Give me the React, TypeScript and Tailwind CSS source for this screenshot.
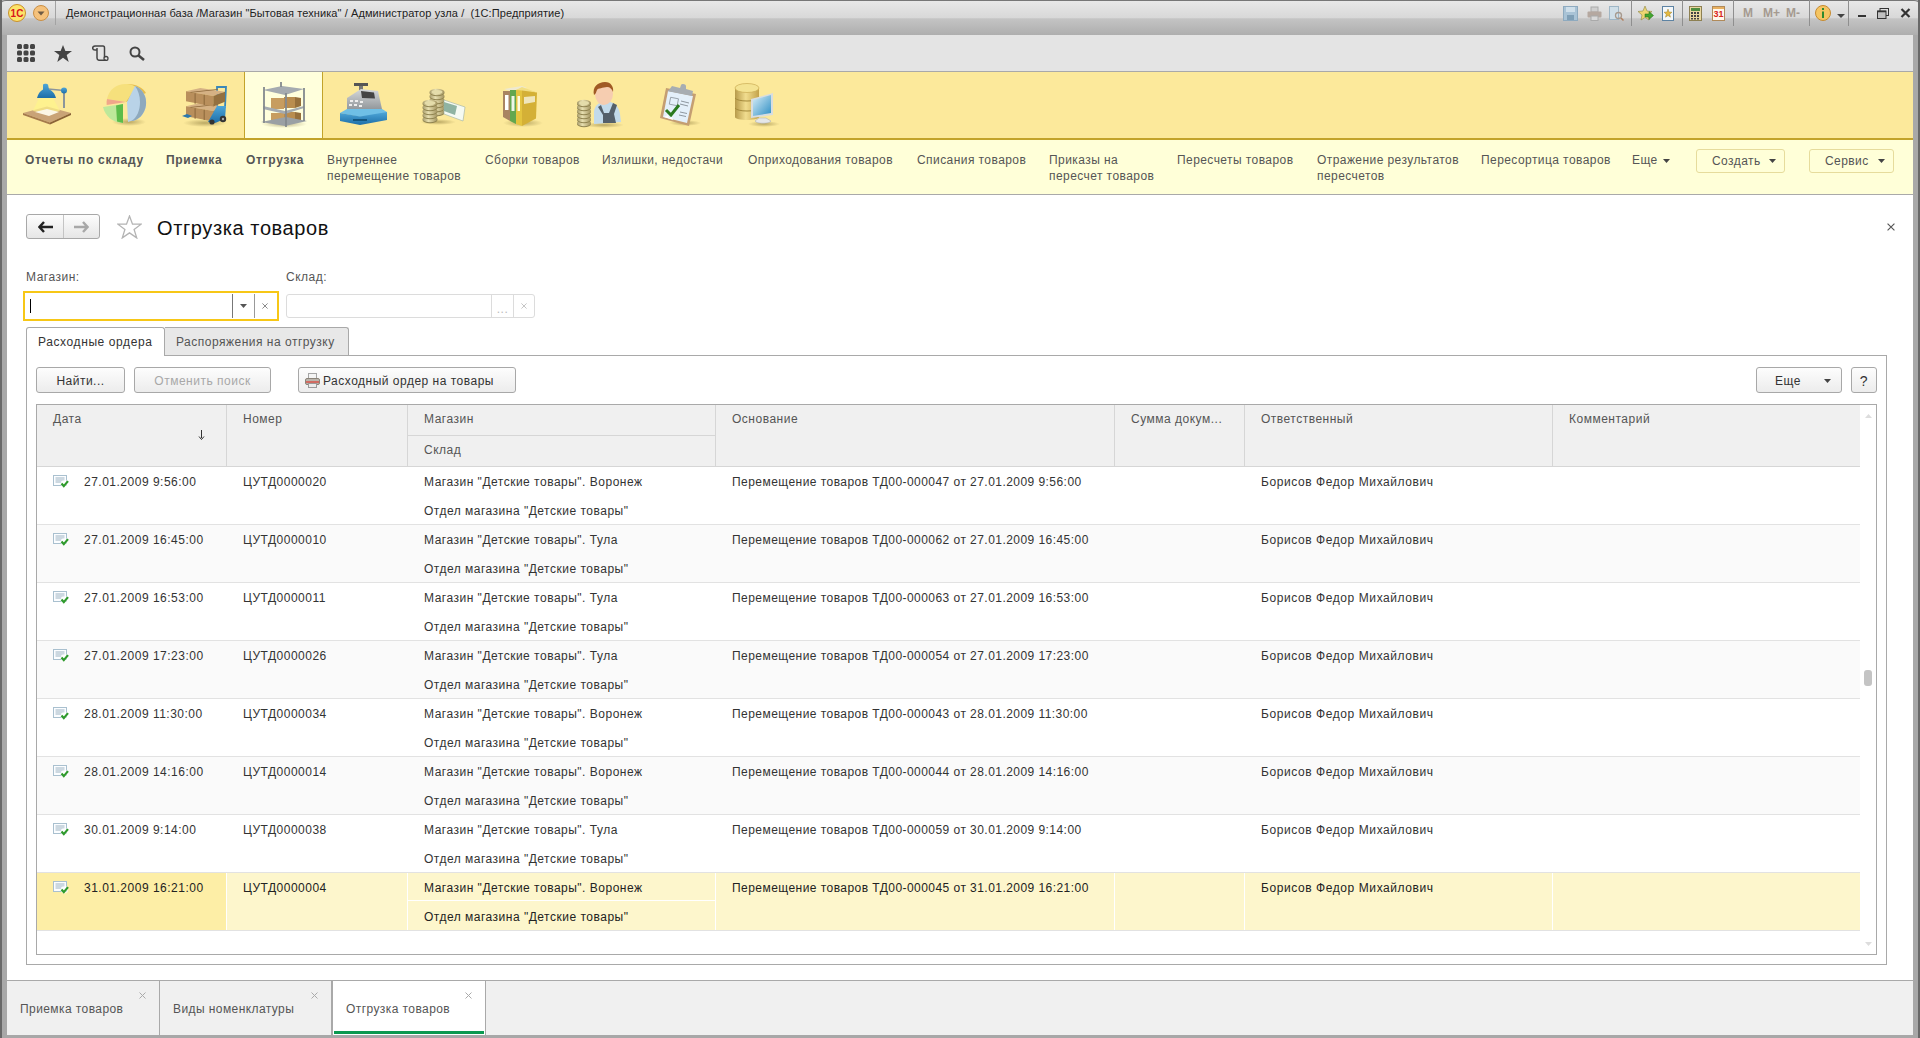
import React from "react";

const rows = [
  ["27.01.2009 9:56:00", "ЦУТД0000020", "Воронеж", "000047"],
  ["27.01.2009 16:45:00", "ЦУТД0000010", "Тула", "000062"],
  ["27.01.2009 16:53:00", "ЦУТД0000011", "Тула", "000063"],
  ["27.01.2009 17:23:00", "ЦУТД0000026", "Тула", "000054"],
  ["28.01.2009 11:30:00", "ЦУТД0000034", "Воронеж", "000043"],
  ["28.01.2009 14:16:00", "ЦУТД0000014", "Воронеж", "000044"],
  ["30.01.2009 9:14:00", "ЦУТД0000038", "Тула", "000059"],
  ["31.01.2009 16:21:00", "ЦУТД0000004", "Воронеж", "000045"],
];

const gridCols = "grid grid-cols-[190px_181px_308px_399px_130px_308px_307px]";

function Caret({ color = "#444" }: { color?: string }) {
  return (
    <svg width="7" height="4" viewBox="0 0 7 4" className="shrink-0">
      <path d="M0 0h7L3.5 4z" fill={color} />
    </svg>
  );
}

function Cross({ color = "#888", size = 7 }: { color?: string; size?: number }) {
  return (
    <svg width={size} height={size} viewBox="0 0 7 7" className="shrink-0">
      <path d="M.5.5l6 6M6.5.5l-6 6" stroke={color} strokeWidth="1" fill="none" />
    </svg>
  );
}

function DocCheck() {
  return (
    <svg width="16" height="13" viewBox="0 0 16 13" className="shrink-0">
      <rect x="0.5" y="0.5" width="13" height="10" fill="#fbfdff" stroke="#a9c0cf" />
      <path d="M2.5 3h9M2.5 5h9M2.5 7h6" stroke="#9db3c2" strokeWidth="1" />
      <circle cx="11.5" cy="8.8" r="3.8" fill="#fff" opacity="0.6" />
      <path d="M8.5 8.5l2.3 2.6 4.2-5" stroke="#2f9a2c" strokeWidth="2.2" fill="none" />
    </svg>
  );
}

function PrinterIcon() {
  return (
    <svg width="15" height="15" viewBox="0 0 15 15" className="shrink-0">
      <rect x="3.5" y="0.5" width="8" height="6" fill="#f4f4f4" stroke="#a5a5a5" />
      <rect x="0.5" y="5.5" width="14" height="6" rx="1.5" fill="#b9b4ac" stroke="#8b8378" />
      <rect x="1" y="8" width="13" height="2" fill="#d9534a" opacity="0.75" />
      <rect x="3.5" y="10.5" width="8" height="4" fill="#ececec" stroke="#9a9a9a" />
    </svg>
  );
}

function BigDefs() {
  return (
    <svg width="0" height="0" className="absolute">
      <defs>
        <linearGradient id="gBlue" x1="0" y1="0" x2="0" y2="1">
          <stop offset="0" stopColor="#4ea6d8" />
          <stop offset="1" stopColor="#1d6ea8" />
        </linearGradient>
        <linearGradient id="gGold" x1="0" y1="0" x2="1" y2="0">
          <stop offset="0" stopColor="#b79a4a" />
          <stop offset="0.45" stopColor="#f1dd8f" />
          <stop offset="1" stopColor="#c3a24a" />
        </linearGradient>
        <linearGradient id="gCoin" x1="0" y1="0" x2="1" y2="0">
          <stop offset="0" stopColor="#a69a6a" />
          <stop offset="0.4" stopColor="#e7dfb0" />
          <stop offset="1" stopColor="#a1925e" />
        </linearGradient>
        <linearGradient id="gGray" x1="0" y1="0" x2="0" y2="1">
          <stop offset="0" stopColor="#d5d8da" />
          <stop offset="1" stopColor="#8d9296" />
        </linearGradient>
        <linearGradient id="gScreen" x1="0" y1="0" x2="1" y2="1">
          <stop offset="0" stopColor="#d8eef8" />
          <stop offset="1" stopColor="#2f8fc4" />
        </linearGradient>
        <radialGradient id="gShadow">
          <stop offset="0" stopColor="#6b5a20" stopOpacity="0.45" />
          <stop offset="1" stopColor="#6b5a20" stopOpacity="0" />
        </radialGradient>
      </defs>
    </svg>
  );
}

const Big = ({ children }: { children: React.ReactNode }) => (
  <svg width="48" height="48" viewBox="0 0 48 48">
    {children}
  </svg>
);

function Lamp() {
  return (
    <Big>
      <path d="M0 32L24 25.5 48 32 27 41.5z" fill="#c9a377" />
      <path d="M0 32L27 41.5V43.5L0 34z" fill="#a57a4d" />
      <path d="M27 41.5L48 32v2L27 43.5z" fill="#8a6238" />
      <path d="M16 17h14l7 13-13 3-14-3z" fill="#fff58a" opacity="0.7" />
      <path d="M12 31L24 28l12 3-10 4z" fill="#fbf6e6" />
      <path d="M41 10v17" stroke="#8c959b" strokeWidth="2" />
      <path d="M25 8L41 9.5" stroke="#8c959b" strokeWidth="1.6" />
      <circle cx="41" cy="9.5" r="3" fill="url(#gBlue)" />
      <path d="M20 3.500c1-1 4-1 5 0l1 5c3 1 6 4 7 8.500H14c1-4 3-7 6-8.500z" fill="url(#gBlue)" />
    </Big>
  );
}

function Pie() {
  return (
    <Big>
      <ellipse cx="27" cy="41" rx="17" ry="4" fill="url(#gShadow)" />
      <path d="M24 21L25 3c9-.3 16 4 19 9z" fill="#e5bd4d" />
      <path d="M24 21L5 18C7 8 15 2.5 25 3c3 .2 6 1 9 3z" fill="#f6e07c" />
      <path d="M24 21L5 18c-.5 2-.6 4-.3 6z" fill="#f0a68a" />
      <path d="M25 21l8-16c8 3 12 11 11 19-1 9-8 16-15 16l-3 1z" fill="#b9d3e8" />
      <path d="M33 5c8 3 12 11 11 19-1 9-8 16-15 16 6-3 9-11 9-19 0-6-2-12-5-16z" fill="#8ea9bd" />
      <path d="M1 26l20-3v19C11 42 3 35 1 26z" fill="#bde89a" />
      <path d="M14 24.500L21 23v19l-6 -1.500z" fill="#5cbc4a" />
    </Big>
  );
}

function Box({ x, y }: { x: number; y: number }) {
  return (
    <g transform={`translate(${x} ${y}) scale(1.3 0.95)`}>
      <path d="M0 3.500L11 0l19 4-9 4.500z" fill="#d5b184" />
      <path d="M0 3.500L21 8.500V19.500L0 14z" fill="#b98f5c" />
      <path d="M21 8.500l9-4.500v10.500l-9 5z" fill="#94703f" />
      <path d="M7 5.500v11M14 7v11M3.500 4.500l21-3" stroke="#8d693c" strokeWidth="0.8" fill="none" />
    </g>
  );
}

function Pallet() {
  return (
    <Big>
      <ellipse cx="24" cy="42" rx="22" ry="4" fill="url(#gShadow)" />
      <path d="M36 6h9l-1 20h-8z" fill="none" stroke="#3a87b8" strokeWidth="1.800" />
      <path d="M36 13h8" stroke="#3a87b8" strokeWidth="1.500" />
      <Box x={5} y={22} />
      <Box x={5} y={7} />
      <path d="M1 35l5-2 5 2-4 2z" fill="#2b78ad" />
      <path d="M36 25h9l-1 13-10 4-7-1z" fill="url(#gBlue)" />
      <circle cx="31" cy="41" r="2.600" fill="#333" />
      <circle cx="42" cy="38" r="3.200" fill="#333" />
      <circle cx="42" cy="38" r="1.200" fill="#aaa" />
    </Big>
  );
}

function Shelf() {
  return (
    <Big>
      <ellipse cx="24" cy="43" rx="23" ry="4" fill="url(#gShadow)" />
      <rect x="11" y="17" width="13" height="11" fill="#c79d5f" />
      <rect x="24" y="16" width="11" height="11" fill="#b98d4f" />
      <path d="M35 16l6 1v8l-6 2z" fill="#96703c" />
      <rect x="11" y="32" width="13" height="10" fill="#c79d5f" />
      <rect x="24" y="31" width="11" height="10" fill="#b98d4f" />
      <path d="M35 31l6 1v8l-6 2z" fill="#96703c" />
      <path d="M3 9l19-4 22 3-19 6z" fill="#a5abb0" />
      <path d="M3 25l22 5 19-5v2l-19 6-22-5z" fill="#a5abb0" />
      <path d="M1 41l24 4 22-5-21-4z" fill="#9aa0a4" />
      <path d="M4 6v36M26 12v34M44 7v33M21 1v5" stroke="#848a8e" strokeWidth="1.800" />
    </Big>
  );
}

function Register() {
  return (
    <Big>
      <path d="M15 2h14v3H15z" fill="#555" />
      <path d="M20 5h4v6h-4z" fill="#777" />
      <path d="M8 17L22 8l17 2 4 18-35 2z" fill="url(#gGray)" />
      <path d="M22 10l13 1.500 1 6-13-.5z" fill="#444" />
      <g fill="#eee">
        <rect x="11" y="19" width="3" height="2" />
        <rect x="16" y="19" width="3" height="2" />
        <rect x="21" y="20" width="3" height="2" />
        <rect x="10" y="23" width="3" height="2" />
        <rect x="15" y="23" width="3" height="2" />
        <rect x="20" y="24" width="3" height="2" />
      </g>
      <path d="M1 32l7-4 35 0 5 3-1 2-26 3z" fill="#6fbfe6" />
      <path d="M1 32l20 3.500 27-4.500v8L21 44 1 40z" fill="url(#gBlue)" />
      <rect x="14" y="38" width="14" height="2" fill="#13557f" />
    </Big>
  );
}

function CoinStack({ x, bottom, n, w = 13 }: { x: number; bottom: number; n: number; w?: number }) {
  const els = [];
  for (let i = 0; i < n; i++) {
    const y = bottom - i * 4;
    els.push(
      <g key={i}>
        <ellipse cx={x} cy={y} rx={w / 2 + 1} ry="3.200" fill="#8f834f" />
        <ellipse cx={x} cy={y - 1} rx={w / 2 + 1} ry="3.200" fill="url(#gCoin)" />
      </g>,
    );
  }
  return <g>{els}<ellipse cx={x} cy={bottom - (n - 1) * 4 - 1} rx={w / 2 - 1} ry="2" fill="#e4dcaa" /></g>;
}

function Coins() {
  return (
    <Big>
      <ellipse cx="20" cy="41" rx="18" ry="3" fill="url(#gShadow)" />
      <CoinStack x={19} bottom={32} n={6} />
      <path d="M26 19l21 7-2 14-19-7z" fill="#f5faf2" stroke="#9cb0a2" strokeWidth="0.6" />
      <path d="M26 21l13 4-2 9-11-4z" fill="#8fb3a2" />
      <CoinStack x={12} bottom={39} n={5} />
    </Big>
  );
}

function Binders() {
  return (
    <Big>
      <ellipse cx="26" cy="42" rx="20" ry="4" fill="url(#gShadow)" />
      <path d="M7 8l18-3 5 2-17 3z" fill="#eee9d0" />
      <path d="M6 10h7v30l-7-4z" fill="#a98462" />
      <rect x="8" y="14" width="3.500" height="15" fill="#fff" />
      <path d="M13 9h6v34l-6-3z" fill="#63a74f" />
      <rect x="14.500" y="15" width="3" height="15" fill="#eef6e8" />
      <path d="M19 9l6-1v37l-6-2z" fill="#e4c43f" />
      <path d="M25 8l15 3.500-1 26L25 45z" fill="#d4b036" />
      <path d="M19 9l6-3 15 5.500-15 -2z" fill="#f2de82" />
      <path d="M27 16l11-1v6l-11 2z" fill="#f0e6bb" />
      <rect x="20.500" y="15" width="2.500" height="15" fill="#fffbe0" />
    </Big>
  );
}

function Person() {
  return (
    <Big>
      <ellipse cx="28" cy="44" rx="20" ry="3" fill="url(#gShadow)" />
      <path d="M18 30c1-6 6-9 9-9h7c5 1 9 5 10 12l1 8-27 2z" fill="#c2daea" />
      <path d="M22 26l5 8v8h13l-2-9 3-9-4-2-4 10h-5l-3-8z" fill="#54606a" />
      <ellipse cx="28" cy="13" rx="9" ry="11" fill="#f6cdb0" />
      <path d="M18 14c-2-8 4-13 11-13 6 0 9 5 8 10-1-3-3-5-6-5-4 1-9 1-10 3-1 2-1 4-3 5z" fill="#a05a24" />
      <CoinStack x={8} bottom={43} n={6} w={12} />
    </Big>
  );
}

function Clipboard() {
  return (
    <Big>
      <ellipse cx="30" cy="42" rx="16" ry="3" fill="url(#gShadow)" />
      <path d="M11 7l30 6-7 32L5 37z" fill="#c49e72" />
      <path d="M13 10l25 5-6 27-24-6z" fill="#e4f0fa" />
      <path d="M14 9l3-4 8 2 1-3c1-2 5-1 5 1v3l7 2-1 5-25-5z" fill="#a7adb2" />
      <rect x="15" y="17" width="8" height="7" fill="none" stroke="#8e979f" strokeWidth="0.8" transform="rotate(11 19 20)" />
      <path d="M26 20l8 2M25 23l8 2M25 31l7 1.500M24 34l7 1.500" stroke="#8e979f" strokeWidth="1" />
      <path d="M11 29l5 5 8-10" stroke="#2a7a1f" strokeWidth="3" fill="none" />
      <path d="M9 36l4-2 1 3 3-1 1 3z" fill="#fff" />
    </Big>
  );
}

function Database() {
  return (
    <Big>
      <ellipse cx="30" cy="43" rx="16" ry="3" fill="url(#gShadow)" />
      <path d="M1 7v29c0 4 24 4 24 0V7z" fill="url(#gGold)" />
      <ellipse cx="13" cy="7" rx="12" ry="4.500" fill="#f4e392" stroke="#c3a24a" strokeWidth="0.6" />
      <path d="M1 17c2 4 22 4 24 0M1 27c2 4 22 4 24 0" stroke="#a48a3c" strokeWidth="1" fill="none" />
      <path d="M17 18l22-6 0 22-22 3z" fill="#d8dde0" />
      <path d="M19 19l18-5 0 18-18 3z" fill="url(#gScreen)" />
      <path d="M25 37h7l5 3c-1 3-15 3-16 0z" fill="#e5e7e8" stroke="#a5a9ac" strokeWidth="0.5" />
    </Big>
  );
}

const sections = [Lamp, Pie, Pallet, Shelf, Register, Coins, Binders, Person, Clipboard, Database];

const menu: [number, string[], boolean][] = [
  [141, ["Отчеты по складу"], true],
  [80, ["Приемка"], true],
  [81, ["Отгрузка"], true],
  [158, ["Внутреннее", "перемещение товаров"], false],
  [117, ["Сборки товаров"], false],
  [146, ["Излишки, недостачи"], false],
  [169, ["Оприходования товаров"], false],
  [132, ["Списания товаров"], false],
  [128, ["Приказы на", "пересчет товаров"], false],
  [140, ["Пересчеты товаров"], false],
  [164, ["Отражение результатов", "пересчетов"], false],
  [151, ["Пересортица товаров"], false],
];

function Btn({
  w,
  children,
  disabled,
  className = "",
}: {
  w: string;
  children: React.ReactNode;
  disabled?: boolean;
  className?: string;
}) {
  return (
    <div
      className={`${w} ${className} h-[26px] pt-px flex items-center justify-center rounded-[3px] border border-[#a8a8a8] bg-[linear-gradient(180deg,#fdfdfd,#ececec)] ${
        disabled ? "text-[#a8a8a8]" : "text-[#333]"
      }`}
    >
      {children}
    </div>
  );
}

function Sep() {
  return <div className="w-px h-[26px] bg-[#8f8f8f] shrink-0" />;
}

function TitleBar() {
  return (
    <div className="h-[35px] shrink-0 flex items-center pb-[10px] rounded-t-[6px] border-t border-[#777] tracking-normal bg-[linear-gradient(180deg,#e8e8e8_0%,#d8d8d8_50%,#c4c4c4_52%,#aeaeae_100%)] -ml-[2px] -mr-[2px]">
      <div className="w-[8px] shrink-0" />
      <svg width="18" height="18" viewBox="0 0 18 18" className="shrink-0">
        <circle cx="9" cy="9" r="8.500" fill="#fde46a" stroke="#c9902a" />
        <text x="9" y="12.500" textAnchor="middle" fontSize="10" fontWeight="700" fontFamily="Liberation Sans" fill="#d9161c">1С</text>
      </svg>
      <div className="w-[7px] shrink-0" />
      <svg width="16" height="16" viewBox="0 0 16 16" className="shrink-0">
        <circle cx="8" cy="8" r="7.500" fill="#f5c27c" stroke="#c98f45" />
        <path d="M4.500 6.500h7L8 10.500z" fill="#6d5a44" />
      </svg>
      <div className="ml-[6px] w-px h-[24px] bg-[#a3a3a3]" />
      <div className="ml-[10px] text-[#222] text-[11px] tracking-[0.09px] whitespace-nowrap">Демонстрационная база /Магазин "Бытовая техника" / Администратор узла /&nbsp; (1С:Предприятие)</div>
      <div className="flex-1" />
      <div className="flex items-center shrink-0">
        <svg width="15" height="15" viewBox="0 0 15 15"><rect x="0.5" y="0.5" width="14" height="14" fill="#a9c3d6" stroke="#8eaabf" /><rect x="3" y="1" width="9" height="5" fill="#cfdfea" /><rect x="4" y="9" width="7" height="5" fill="#7f9fb6" /></svg>
        <div className="w-[9px]" />
        <svg width="15" height="15" viewBox="0 0 15 15"><rect x="4" y="1" width="7" height="5" fill="#cfcfcf" stroke="#aaa" /><rect x="0.5" y="5.500" width="14" height="6" rx="1" fill="#b5a8a0" /><rect x="4" y="10" width="7" height="4.500" fill="#d9d9d9" stroke="#aaa" /></svg>
        <div className="w-[7px]" />
        <svg width="15" height="15" viewBox="0 0 15 15"><rect x="0.5" y="0.5" width="9" height="13" fill="#d0dfe8" stroke="#9eb6c6" /><circle cx="9.500" cy="9.500" r="3" fill="none" stroke="#a79a8e" strokeWidth="1.300" /><path d="M12 12l2.500 2.500" stroke="#b08060" strokeWidth="1.500" /></svg>
        <div className="w-[7px]" />
        <Sep />
        <div className="w-[6px]" />
        <svg width="16" height="15" viewBox="0 0 16 15"><path d="M7 0l2 5 5 .5-4 3.500 1 5-4-2.500-4 2.500 1-5L0 5.500 5 5z" fill="#ecd572" stroke="#8f8645" strokeWidth="0.6" /><path d="M7 8h4V5.500L15.500 9.500 11 13.500V11H7z" fill="#43a52f" stroke="#236b18" strokeWidth="0.5" /></svg>
        <div className="w-[8px]" />
        <svg width="12" height="15" viewBox="0 0 12 15"><rect x="0.5" y="0.5" width="11" height="14" fill="#f3f7fa" stroke="#5d83a3" /><path d="M6 3l1 3 3 .2-2.300 2 .8 3L6 9.500 3.500 11.200l.8-3-2.300-2L5 6z" fill="#e5b93f" stroke="#8f7420" strokeWidth="0.4" /></svg>
        <div className="w-[8px]" />
        <Sep />
        <div className="w-[6px]" />
        <svg width="13" height="15" viewBox="0 0 13 15"><rect x="0.5" y="0.5" width="12" height="14" fill="#e8d7a0" stroke="#8d8052" /><rect x="2" y="2" width="9" height="3" fill="#4f8d3f" /><g fill="#444"><rect x="2" y="6" width="2" height="2" /><rect x="5" y="6" width="2" height="2" /><rect x="8" y="6" width="2" height="2" /><rect x="2" y="9" width="2" height="2" /><rect x="5" y="9" width="2" height="2" /><rect x="8" y="9" width="2" height="2" /><rect x="2" y="12" width="2" height="1.500" /><rect x="5" y="12" width="2" height="1.500" /><rect x="8" y="12" width="2" height="1.500" /></g></svg>
        <div className="w-[10px]" />
        <div className="w-[13px] h-[15px] border border-[#b08a5a] bg-[#fff8ec] flex flex-col">
          <div className="h-[3px] bg-[#e8b060]" />
          <div className="flex-1 text-[9px] leading-[11px] font-bold text-[#d8261c] text-center">31</div>
        </div>
        <div className="w-[8px]" />
        <Sep />
        <div className="w-[9px]" />
        <div className="flex items-center font-bold text-[#a59a90] text-[12px]">
          <span className="w-[20px]">M</span>
          <span className="w-[23px]">M+</span>
          <span className="w-[23px]">M-</span>
        </div>
        <Sep />
        <div className="w-[5px]" />
        <svg width="16" height="16" viewBox="0 0 16 16"><circle cx="8" cy="8" r="7.500" fill="#f5c562" stroke="#c58a30" /><rect x="7" y="3" width="2" height="2" fill="#2f8a2f" /><rect x="7" y="6.500" width="2" height="6.500" fill="#2f8a2f" /></svg>
        <div className="w-[6px]" />
        <div className="mt-[6px]"><svg width="8" height="4" viewBox="0 0 8 4" className="shrink-0"><path d="M0 0h8L4 4z" fill="#444" /></svg></div>
        <div className="w-[3px]" />
        <Sep />
        <div className="w-[9px]" />
        <div className="w-[8px] h-[2px] bg-[#333] mt-[5px]" />
        <div className="w-[11px]" />
        <svg width="12" height="11" viewBox="0 0 12 11"><rect x="3" y="0.500" width="8.500" height="7" fill="none" stroke="#333" /><rect x="0.500" y="3" width="8.500" height="7.500" fill="#c0c0c0" stroke="#333" /><path d="M0.500 3.500h8.500" stroke="#333" strokeWidth="1.500" /></svg>
        <div className="w-[11px]" />
        <svg width="11" height="10" viewBox="0 0 11 10"><path d="M1.500 1l8 8M9.500 1l-8 8" stroke="#333" strokeWidth="2.200" /></svg>
        <div className="w-[9px]" />
      </div>
    </div>
  );
}

function Toolbar() {
  return (
    <div className="h-[37px] shrink-0 flex items-center bg-[#e4e4e4] border-b border-[#a9a9a9] pl-[10px]">
      <svg width="18" height="18" viewBox="0 0 18 18" className="shrink-0">
        <g fill="#444">
          {[0, 1, 2].flatMap((r) =>
            [0, 1, 2].map((c) => <rect key={`${r}${c}`} x={c * 6.500} y={r * 6.500} width="5" height="5" rx="1.500" />),
          )}
        </g>
      </svg>
      <svg width="18" height="17" viewBox="0 0 18 17" className="ml-[19px] shrink-0">
        <path d="M9 0l2.400 6H18l-5.300 4 2 7L9 12.800 3.300 17l2-7L0 6h6.600z" fill="#444" />
      </svg>
      <svg width="17" height="16" viewBox="0 0 17 16" className="ml-[20px] shrink-0">
        <path d="M3 1h8c1 0 1.500 .8 1.500 2v9.500M3 1C1.500 1 .7 2 .7 3s.8 2 2.300 2h2M5 3v10c0 1.500 1 2.300 2.500 2.300H14" fill="none" stroke="#444" strokeWidth="1.500" />
        <circle cx="14" cy="13.500" r="2" fill="none" stroke="#444" strokeWidth="1.300" />
      </svg>
      <svg width="16" height="15" viewBox="0 0 16 15" className="ml-[20px] shrink-0">
        <circle cx="6" cy="6" r="4.500" fill="none" stroke="#444" strokeWidth="2" />
        <path d="M9.500 9.500L15 14" stroke="#444" strokeWidth="2.600" />
      </svg>
    </div>
  );
}

function SectionPanel() {
  return (
    <div className="h-[68px] shrink-0 flex bg-[#fce99b] border-b-2 border-[#c2a32a]">
      {sections.map((S, i) => (
        <div
          key={i}
          className={`w-[79px] flex items-center justify-center ${
            i === 3 ? "bg-[#ffffdc] border-x border-[#c2a32a]" : ""
          }`}
        >
          <S />
        </div>
      ))}
    </div>
  );
}

function FuncPanel() {
  return (
    <div className="h-[55px] shrink-0 flex bg-[#ffffd8] border-b border-[#a9a9a9] pl-[18px] text-[#555] tracking-[0.43px]">
      {menu.map(([w, lines, bold], i) => (
        <div
          key={i}
          style={{ width: w }}
          className={`shrink-0 pt-[12px] leading-[16px] whitespace-nowrap ${bold ? "font-bold tracking-[0.7px]" : ""}`}
        >
          {lines.map((l) => (
            <div key={l}>{l}</div>
          ))}
        </div>
      ))}
      <div className="w-[64px] shrink-0 pt-[12px] leading-[16px] flex items-start gap-[5px]">
        <span>Еще</span>
        <span className="mt-[7px]"><Caret /></span>
      </div>
      <div className="w-[89px] h-[24px] mt-[9px] pb-px rounded-[3px] border border-[#e6dc9c] flex items-center pl-[15px] shrink-0">
        <span className="w-[57px]">Создать</span>
        <Caret />
      </div>
      <div className="w-[85px] h-[24px] mt-[9px] pb-px ml-[24px] rounded-[3px] border border-[#e6dc9c] flex items-center pl-[15px] shrink-0">
        <span className="w-[53px]">Сервис</span>
        <Caret />
      </div>
    </div>
  );
}

function Row({ r, i }: { r: string[]; i: number }) {
  const sel = i === 7;
  const alt = i % 2 === 1 && !sel;
  const line = sel ? "border-r border-[#fff]" : "";
  const bg = sel ? "bg-[#fdf6cc]" : alt ? "bg-[#fafafa]" : "bg-white";
  return (
    <div className={`${gridCols} h-[58px] border-b border-[#e2e2e2] ${bg} ${sel ? "text-[#222]" : "text-[#333]"}`}>
      <div className={`pl-4 pt-[8px] flex items-start ${line} ${sel ? "bg-[#fdeea6]" : ""}`}>
        <DocCheck />
        <span className="ml-[15px] leading-[14px] whitespace-nowrap">{r[0]}</span>
      </div>
      <div className={`pl-4 pt-[7px] leading-[16px] ${line}`}>{r[1]}</div>
      <div className={`flex flex-col ${line}`}>
        <div className={`h-[28px] pl-4 pt-[7px] leading-[16px] whitespace-nowrap ${sel ? "border-b border-[#fff]" : ""}`}>
          Магазин "Детские товары". {r[2]}
        </div>
        <div className="h-[29px] pl-4 pt-[8px] leading-[16px] whitespace-nowrap">Отдел магазина "Детские товары"</div>
      </div>
      <div className={`pl-4 pt-[7px] leading-[16px] whitespace-nowrap tracking-[0.45px] ${line}`}>
        Перемещение товаров ТД00-{r[3]} от {r[0]}
      </div>
      <div className={line} />
      <div className={`pl-4 pt-[7px] leading-[16px] whitespace-nowrap tracking-[0.58px] ${line}`}>Борисов Федор Михайлович</div>
      <div />
    </div>
  );
}

function Table() {
  const hc = "pl-4 pt-[6px] leading-[16px] border-r border-[#d6d6d6] text-[#555] whitespace-nowrap";
  return (
    <div className="flex-1 flex border border-[#a9a9a9] bg-white min-h-0">
      <div className="w-[1823px] shrink-0 flex flex-col">
        <div className={`${gridCols} h-[62px] bg-[#f0f0f0] border-b border-[#d6d6d6] shrink-0`}>
          <div className={`${hc} flex flex-col`}>
            <span>Дата</span>
            <svg width="7" height="10" viewBox="0 0 7 10" className="ml-[145px] mt-[3px]">
              <path d="M3.500 0v8M1 6.500L3.500 9.500 6 6.500" stroke="#333" fill="none" />
            </svg>
          </div>
          <div className={hc}>Номер</div>
          <div className="flex flex-col border-r border-[#d6d6d6] text-[#555]">
            <div className="h-[31px] pl-4 pt-[6px] leading-[16px] border-b border-[#d6d6d6]">Магазин</div>
            <div className="pl-4 pt-[6px] leading-[16px]">Склад</div>
          </div>
          <div className={hc}>Основание</div>
          <div className={hc}>Сумма докум...</div>
          <div className={hc}>Ответственный</div>
          <div className="pl-4 pt-[6px] leading-[16px] text-[#555]">Комментарий</div>
        </div>
        {rows.map((r, i) => (
          <Row key={i} r={r} i={i} />
        ))}
      </div>
      <div className="flex-1 flex flex-col items-center pt-[9px] pb-[8px]">
        <svg width="7" height="4" viewBox="0 0 7 4" className="shrink-0"><path d="M0 4h7L3.500 0z" fill="#ddd" /></svg>
        <div className="w-[8px] h-[16px] mt-[252px] rounded-[3px] bg-[#c4c4c4] shrink-0" />
        <div className="flex-1" />
        <svg width="7" height="4" viewBox="0 0 7 4" className="shrink-0"><path d="M0 0h7L3.500 4z" fill="#ddd" /></svg>
      </div>
    </div>
  );
}

function Content() {
  return (
    <div className="flex-1 min-h-0 flex flex-col bg-white">
      <div className="h-[25px] mt-[19px] flex items-center pl-[19px] pr-[18px] shrink-0">
        <div className="w-[74px] h-[25px] flex rounded-[3px] border border-[#a8a8a8] bg-[linear-gradient(180deg,#fdfdfd,#e6e6e6)]">
          <div className="w-[37px] flex items-center justify-center border-r border-[#c4c4c4]">
            <svg width="15" height="12" viewBox="0 0 15 12"><path d="M6 1L1.500 6 6 11M2 6h13" fill="none" stroke="#222" strokeWidth="2.400" /></svg>
          </div>
          <div className="flex-1 flex items-center justify-center">
            <svg width="15" height="12" viewBox="0 0 15 12"><path d="M9 1l4.500 5L9 11M0 6h13" fill="none" stroke="#a8a8a8" strokeWidth="2.400" /></svg>
          </div>
        </div>
        <svg width="25" height="24" viewBox="0 0 25 24" className="ml-[17px]">
          <path d="M12.500 1l3 8.200h8.600l-7 5.300 2.600 8.400-7.200-5-7.200 5 2.600-8.400-7-5.300h8.600z" fill="none" stroke="#b4b4b4" strokeWidth="1.300" />
        </svg>
        <div className="ml-[15px] mt-[2px] text-[20px] tracking-[0.6px] leading-[24px] text-[#111] whitespace-nowrap">Отгрузка товаров</div>
        <div className="ml-auto"><Cross color="#555" size={8} /></div>
      </div>
      <div className="mt-[30px] h-[16px] leading-[16px] flex pl-[19px] text-[#555] shrink-0">
        <div className="w-[260px]">Магазин:</div>
        <div>Склад:</div>
      </div>
      <div className="mt-[6px] flex items-center pl-[16px] h-[30px] shrink-0">
        <div className="w-[256px] h-[30px] border-2 border-[#f7c716] flex items-center">
          <div className="w-[207px] flex items-center pl-[5px]"><div className="w-px h-[14px] bg-black" /></div>
          <div className="w-[22px] h-[24px] border-l border-[#777] flex items-center justify-center"><Caret color="#555" /></div>
          <div className="w-[21px] h-[24px] border-l border-[#999] flex items-center justify-center"><Cross color="#777" size={6} /></div>
        </div>
        <div className="ml-[7px] w-[249px] h-[24px] rounded-[3px] border border-[#dcdcdc] flex justify-end">
          <div className="w-[22px] border-l border-[#dcdcdc] flex items-end justify-center text-[#bbb] text-[12px] leading-[16px]">...</div>
          <div className="w-[21px] border-l border-[#dcdcdc] flex items-center justify-center"><Cross color="#bbb" size={6} /></div>
        </div>
      </div>
      <div className="mt-[6px] ml-[19px] mr-[26px] flex-1 min-h-0 flex flex-col pb-[15px]">
        <div className="h-[28px] flex shrink-0 relative z-10">
          <div className="w-[139px] h-[29px] border-x border-t border-[#a9a9a9] rounded-t-[3px] bg-white flex items-center pl-[11px] text-[#333] whitespace-nowrap tracking-[0.6px]">Расходные ордера</div>
          <div className="w-[184px] h-[28px] border-r border-t border-[#a9a9a9] rounded-tr-[3px] bg-[#e8e8e8] flex items-center pl-[11px] text-[#555] whitespace-nowrap">Распоряжения на отгрузку</div>
        </div>
        <div className="flex-1 min-h-0 border border-[#a9a9a9] flex flex-col pt-[11px] px-[9px] pb-[9px]">
          <div className="flex items-center shrink-0">
            <Btn w="w-[89px]">Найти...</Btn>
            <Btn w="w-[137px]" disabled className="ml-[9px]">Отменить поиск</Btn>
            <Btn w="w-[218px]" className="ml-[27px] !justify-start pl-[6px]">
              <PrinterIcon />
              <span className="ml-[3px]">Расходный ордер на товары</span>
            </Btn>
            <div className="flex-1" />
            <Btn w="w-[86px]" className="!justify-start pl-[18px]">
              <span className="w-[49px]">Еще</span>
              <Caret />
            </Btn>
            <Btn w="w-[26px]" className="ml-[9px] text-[14px]">?</Btn>
          </div>
          <div className="mt-[11px] flex-1 min-h-0 flex">
            <Table />
          </div>
        </div>
      </div>
    </div>
  );
}

function OpenTabs() {
  const tabs: [string, string, string][] = [
    ["Приемка товаров", "w-[153px]", "pl-[13px]"],
    ["Виды номенклатуры", "w-[172px]", "pl-[13px]"],
    ["Отгрузка товаров", "w-[154px]", "pl-[13px]"],
  ];
  return (
    <div className="h-[55px] shrink-0 flex bg-[#f0f0f0] border-t border-[#a9a9a9] text-[#555] tracking-[0.42px]">
      {tabs.map(([t, w, p], i) => (
        <div key={t} className={`${w} flex flex-col border-r border-[#a9a9a9] ${i === 2 ? "bg-white border-l" : ""}`}>
          <div className="h-[10px] mt-[9px] flex items-center justify-end pr-[13px]">
            <Cross color="#aaa" size={7} />
          </div>
          <div className={`${p} mt-px leading-[16px] whitespace-nowrap`}>{t}</div>
          <div className="flex-1" />
          {i === 2 && <div className="h-[3px] mx-px mb-px bg-[#0a9950]" />}
        </div>
      ))}
    </div>
  );
}

export default function App() {
  return (
    <div className="w-[1920px] h-[1038px] overflow-hidden flex flex-col bg-[#a8a8a8] border-x-2 border-[#686868] font-['Liberation_Sans','Noto_Sans',sans-serif] text-[12px] leading-[16px] tracking-[0.5px] pb-[3px]">
      <BigDefs />
      <TitleBar />
      <div className="flex-1 min-h-0 flex flex-col ml-[5px] mr-[5px]">
        <Toolbar />
        <SectionPanel />
        <FuncPanel />
        <Content />
        <OpenTabs />
      </div>
    </div>
  );
}
